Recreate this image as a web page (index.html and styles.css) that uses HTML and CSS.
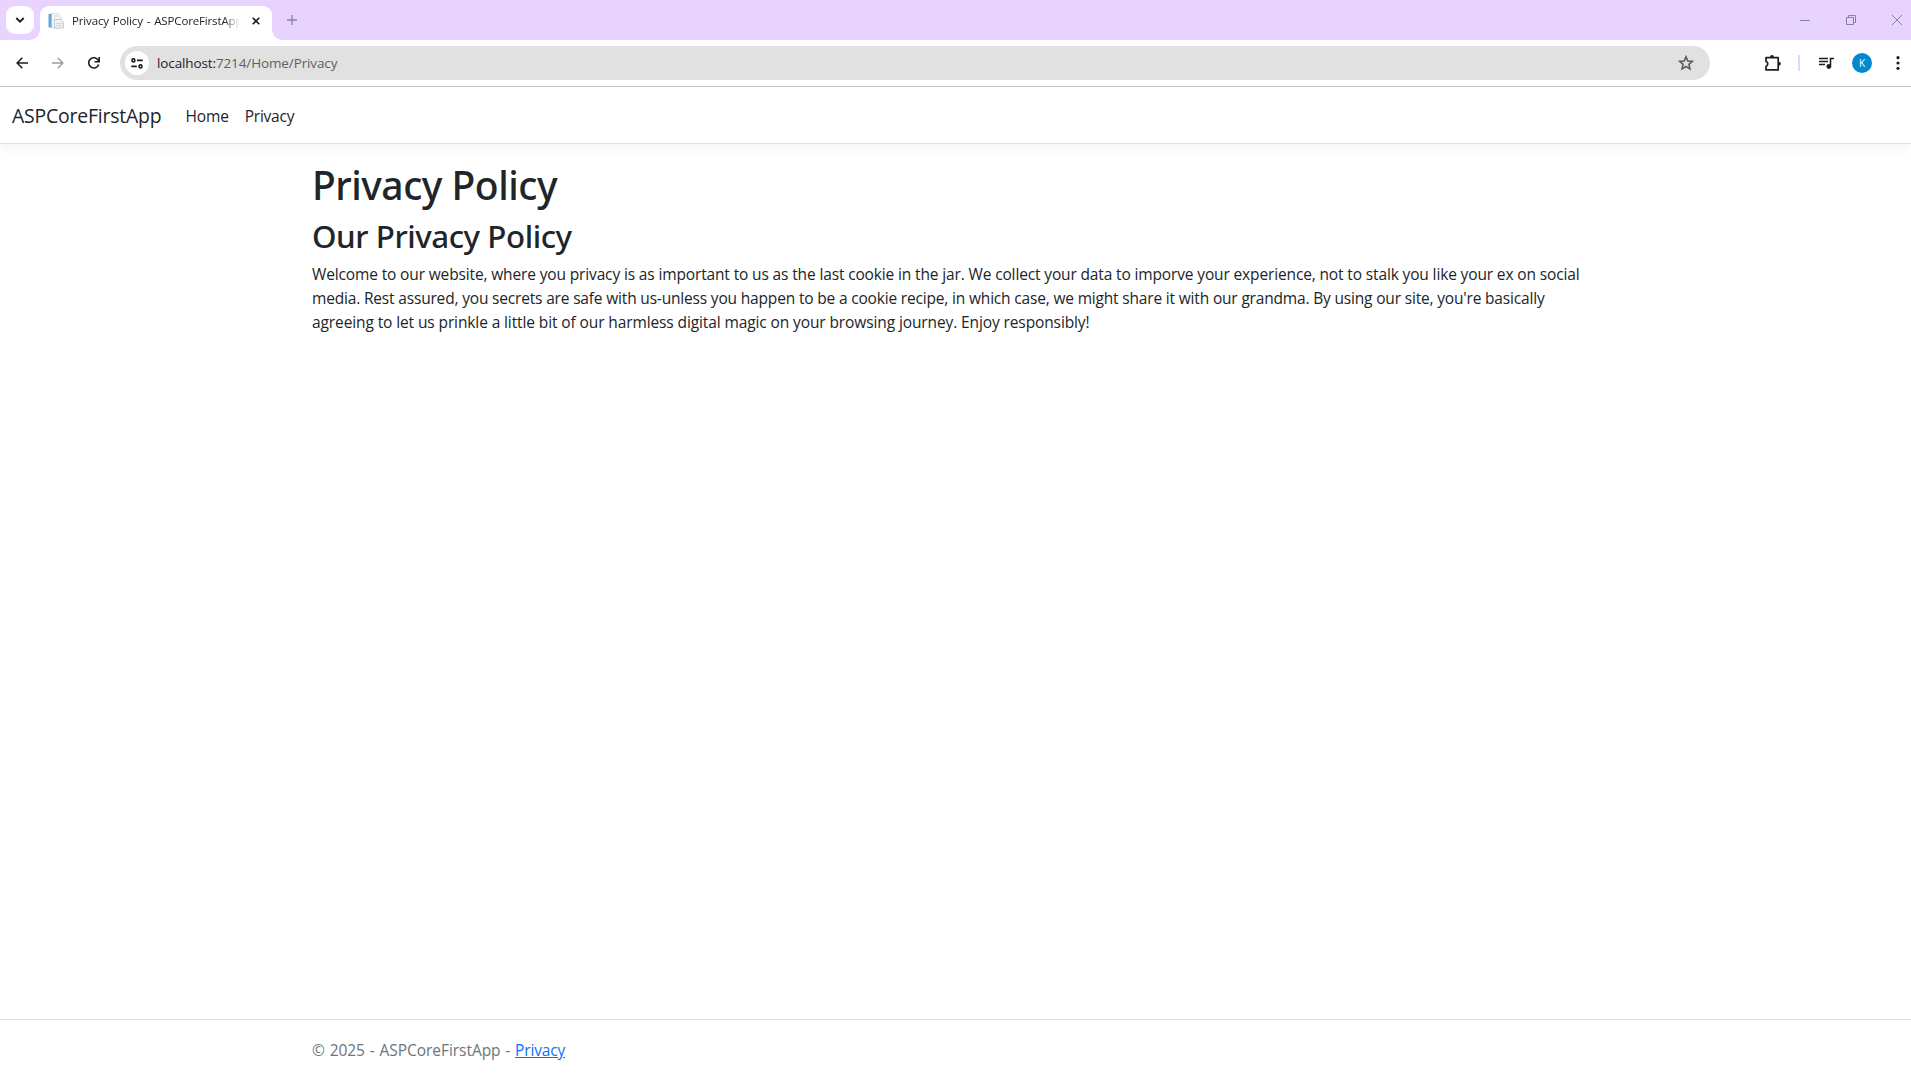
FILE: index.html
```html
<!DOCTYPE html>
<html lang="en">
<head>
<meta charset="utf-8">
<title>Privacy Policy - ASPCoreFirstApp</title>
<link rel="stylesheet" href="styles.css">
</head>
<body>
<div class="tabstrip">
  <div class="tab-search"><svg width="10" height="6" viewBox="0 0 10 6"><path d="M1.3 1l3.7 3.6L8.700 1" fill="none" stroke="#1f1f1f" stroke-width="1.9"/></svg></div>
  <div class="tab">
    <svg class="favicon" width="16" height="16" viewBox="0 0 16 16"><path d="M3.500 .5h7l2.500 2.500v12h-9.500z" fill="#f3f5f7" stroke="#cdd3da" stroke-width=".7"/><path d="M.5 1.200l3-.7v14.300l-3-.6z" fill="#6aa5d8"/><path d="M6.500 6.500h6.300l2.700 2.500v6h-9z" fill="#f1f3f5" stroke="#b8c0c8" stroke-width=".8"/><path d="M8 10.500h6M8 12.500h6M6 3h4" stroke="#c4ccd4" stroke-width=".8"/></svg>
    <span class="tab-title">Privacy Policy - ASPCoreFirstApp</span>
    <svg class="tab-close" width="8" height="8" viewBox="0 0 8 8"><path d="M.7.7l6.600 6.600M7.300.7L.7 7.300" stroke="#1f1f1f" stroke-width="1.600"/></svg>
  </div>
  <svg class="new-tab" width="10" height="10" viewBox="0 0 10 10"><path d="M5 0v10M0 5h10" stroke="#8e8299" stroke-width="1.300"/></svg>
  <div class="window-buttons">
    <svg width="10" height="10" viewBox="0 0 10 10"><path d="M0 5.500h10" stroke="#8c7f99"/></svg>
    <svg width="10" height="10" viewBox="0 0 10 10"><path d="M.5 2.500h7v7h-7zM2.500 2.500v-2h7v7h-2" fill="none" stroke="#8c7f99"/></svg>
    <svg width="10" height="10" viewBox="0 0 10 10"><path d="M0 0l10 10M10 0L0 10" stroke="#8c7f99"/></svg>
  </div>
</div>
<div class="toolbar">
  <svg class="back" width="12" height="12" viewBox="0 0 12 12"><path d="M6.300.7L1.100 6l5.200 5.300M1.100 6H12" fill="none" stroke="#1f1f1f" stroke-width="1.500"/></svg>
  <svg class="forward" width="12" height="12" viewBox="0 0 12 12"><path d="M5.700.7L10.900 6l-5.200 5.300M10.900 6H0" fill="none" stroke="#9a9a9a" stroke-width="1.300"/></svg>
  <svg class="reload" width="12" height="12" viewBox="0 0 12 12"><path d="M10.700 7.400A5.100 5.100 0 1 1 10.300 3.400L11 4.600" fill="none" stroke="#1f1f1f" stroke-width="1.600"/><path d="M11.200 0v4.700H6.500" fill="none" stroke="#1f1f1f" stroke-width="1.600"/></svg>
  <div class="omnibox">
    <div class="site-info"><svg width="12" height="11" viewBox="0 0 12 11"><g fill="none" stroke="#1f1f1f" stroke-width="1.600"><circle cx="2.400" cy="2.400" r="1.500"/><path d="M6 2.400h5.700M.3 8.400h5.500"/><circle cx="9.500" cy="8.400" r="1.500"/></g></svg></div>
    <span class="url"><b>localhost:</b>7214/Home/Privacy</span>
    <svg class="star" width="16" height="16" viewBox="0 0 16 16"><path d="M8 1.800l1.800 4.200 4.600.4-3.500 3 1.100 4.500L8 11.500l-4 2.400 1.100-4.500-3.500-3 4.600-.4z" fill="none" stroke="#5b5b5f" stroke-width="1.600"/></svg>
  </div>
  <svg class="extensions" width="16" height="16" viewBox="0 0 16 16"><path d="M1 2.700h12.200v12.200H1v-3.700a2.500 2.500 0 0 0 0-4.800z" fill="none" stroke="#1f1f1f" stroke-width="1.700" stroke-linejoin="round"/><path d="M5 2.500a2 2.400 0 0 1 4 0zM13.500 6.800a2.400 2 0 0 1 0 4z" fill="#1f1f1f"/></svg>
  <span class="divider"></span>
  <svg class="media" width="16" height="13" viewBox="0 0 16 13"><path d="M0 1.500h9M0 4.500h9M0 7.500h6" stroke="#1f1f1f" stroke-width="1.500"/><circle cx="9.800" cy="9.500" r="2.400" fill="#1f1f1f"/><path d="M11.500 9.500V1.500H15" fill="none" stroke="#1f1f1f" stroke-width="1.600"/></svg>
  <span class="avatar">K</span>
  <svg class="more" width="4" height="14" viewBox="0 0 4 14"><g fill="#1f1f1f"><circle cx="2" cy="1.700" r="1.600"/><circle cx="2" cy="7" r="1.600"/><circle cx="2" cy="12.300" r="1.600"/></g></svg>
</div>
<nav class="navbar"><a class="brand">ASPCoreFirstApp</a><a class="link">Home</a><a class="link link-privacy">Privacy</a></nav>
<main class="content">
  <h1>Privacy Policy</h1>
  <h2>Our Privacy Policy</h2>
  <p><span class="line-first">Welcome to our website, where you privacy is as important to us as the last cookie in the jar. We collect your data to imporve your experience, not to stalk you like your ex on social</span><br>
  <span class="line-middle">media. Rest assured, you secrets are safe with us-unless you happen to be a cookie recipe, in which case, we might share it with our grandma. By using our site, you're basically</span><br>
  <span class="line-last">agreeing to let us prinkle a little bit of our harmless digital magic on your browsing journey. Enjoy responsibly!</span></p>
</main>
<footer class="footer">© 2025 - ASPCoreFirstApp - <a>Privacy</a></footer>
</body>
</html>
```
FILE: styles.css
```css
*{box-sizing:border-box}
body{margin:0;height:1080px;overflow:hidden;display:flex;flex-direction:column;background:#fff;color:#212529;font:15.5px/24px "Open Sans","Noto Sans",sans-serif}
svg{display:block;flex:none}
.tabstrip{height:40px;flex:none;display:flex;align-items:center;background:#e8d3ff;padding-left:6px}
.tab-search{width:28px;height:28px;border-radius:9px;background:#fff;display:flex;align-items:center;justify-content:center;margin-right:6px}
.tab{position:relative;align-self:flex-end;width:232px;height:34px;background:#fff;border-radius:9px 9px 0 0;display:flex;align-items:center;padding:0 12px 5px 8px}
.tab::before,.tab::after{content:"";position:absolute;bottom:0;width:10px;height:10px}
.tab::before{left:-10px;background:radial-gradient(circle at 0 0,transparent 9.500px,#fff 10px)}
.tab::after{right:-10px;background:radial-gradient(circle at 100% 0,transparent 9.500px,#fff 10px)}
.tab-title{margin:0 0 0 8px;width:168px;flex:none;overflow:hidden;white-space:nowrap;font-size:11.5px;letter-spacing:-.15px;word-spacing:1.1px;color:#1f1f1f;-webkit-mask-image:linear-gradient(90deg,#000 152px,transparent 168px)}
.tab-close{margin-left:auto}
.new-tab{margin-left:15px}
.window-buttons{margin-left:auto;display:flex;gap:36px;padding-right:9px}
.toolbar{height:47px;flex:none;display:flex;align-items:center;padding:0 11px 0 16px;border-bottom:1px solid #c8c8c8}
.forward{margin-left:24px}
.reload{margin-left:24px}
.omnibox{width:1590px;height:34px;margin-left:20px;border-radius:17px;background:#e1e1e1;display:flex;align-items:center;padding:0 16px 0 5px}
.site-info{width:24px;height:24px;border-radius:50%;background:#fff;display:flex;align-items:center;justify-content:center}
.url{margin-left:8px;font-size:13.5px;letter-spacing:-.12px;color:#5f5f5f}
.url b{font-weight:400;color:#1f1f1f}
.star{margin-left:auto}
.extensions{margin-left:55px}
.divider{width:2px;height:16px;background:#e8d3ff;margin-left:17px}
.media{margin-left:19px}
.avatar{width:20px;height:20px;border-radius:50%;background:#0288d1;color:#fff;font-size:10px;line-height:20px;text-align:center;margin-left:17px}
.more{margin-left:auto}
.navbar{height:57px;flex:none;display:flex;align-items:flex-start;padding:17px 0 0 12px;border-bottom:1px solid #dee2e6;box-shadow:0 4px 12px rgba(0,0,0,.05)}
.brand{font-size:19.4px;letter-spacing:-.19px;margin-right:24px}
.link{margin-right:16px;letter-spacing:-.1px}
.link-privacy{letter-spacing:-.25px}
.content{padding:17px 0 0 312px}
h1,h2,p{margin:0 0 8px;white-space:nowrap}
h1,h2{font-family:"Noto Sans","Open Sans",sans-serif;font-weight:500}
h1{font-size:39px;line-height:48px;letter-spacing:-.5px}
h2{font-size:31.300px;line-height:38px;letter-spacing:-.45px;margin-bottom:7px}
.line-first{letter-spacing:-.14px}
.line-middle{letter-spacing:-.175px}
.line-last{letter-spacing:-.11px}
.footer{margin-top:auto;height:61px;border-top:1px solid #dee2e6;padding:18px 0 0 312px;color:#6c757d;letter-spacing:-.04px;word-spacing:.8px}
.footer a{color:#0d6efd;text-decoration:underline;letter-spacing:-.15px}
```
